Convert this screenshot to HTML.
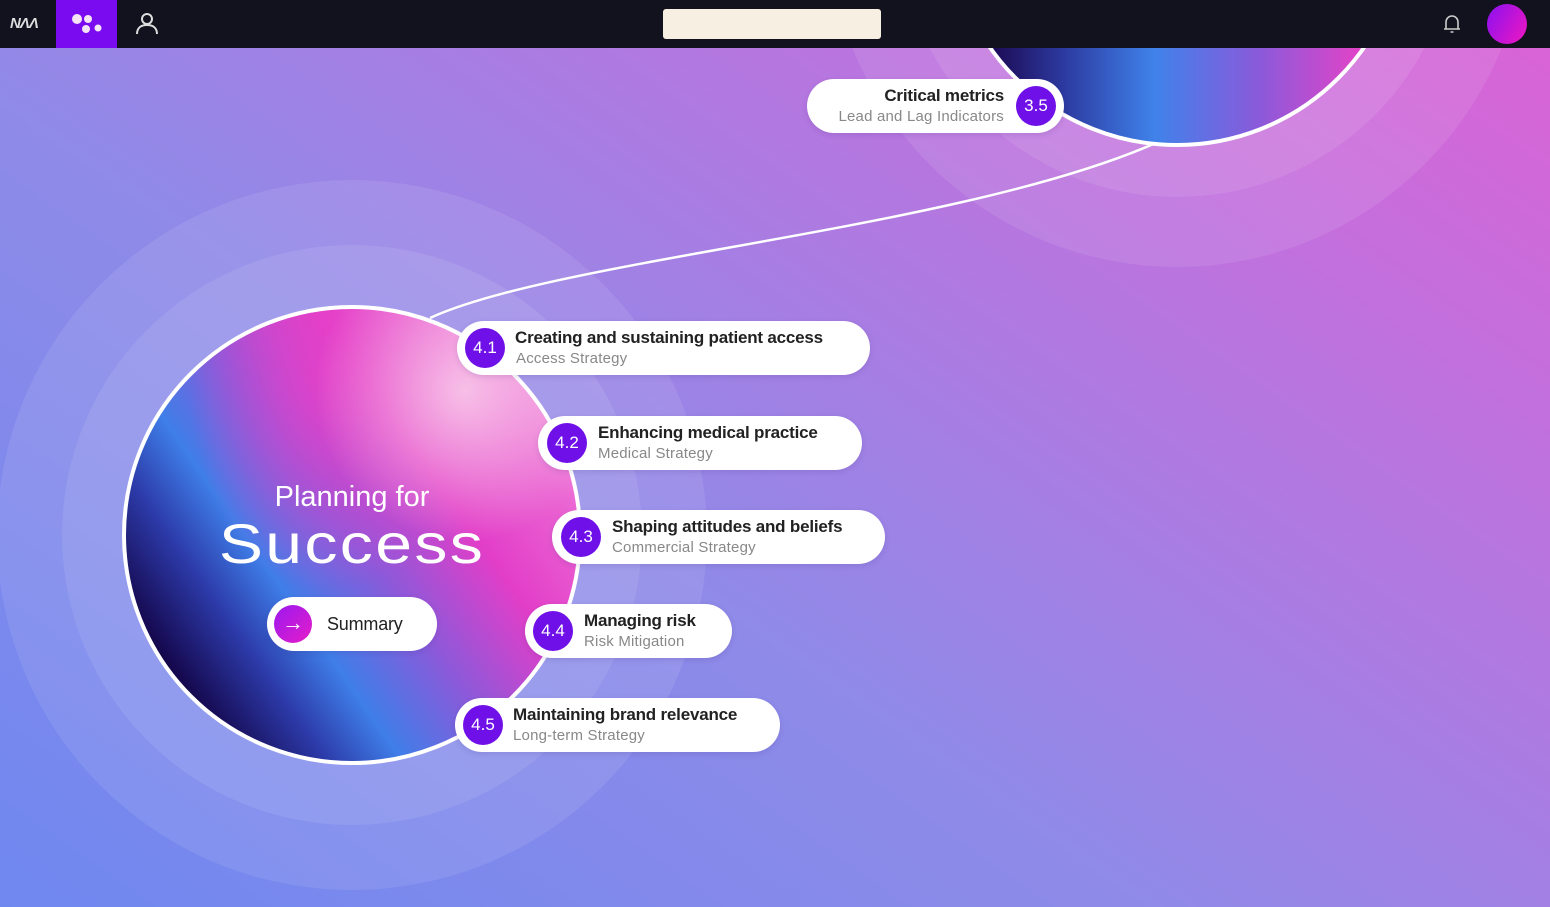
<!DOCTYPE html>
<html><head><meta charset="utf-8"><style>
*{margin:0;padding:0;box-sizing:border-box}
body{width:1550px;height:907px;overflow:hidden;position:relative;font-family:"Liberation Sans",sans-serif;
background:linear-gradient(215deg,#dc62d6 0%,#b676e0 30%,#8f8ae8 60%,#6f88f0 100%);}
.nav{position:absolute;left:0;top:0;width:1550px;height:48px;background:#12121f;}
.halo{position:absolute;border-radius:50%;background:rgba(255,255,255,0.09)}
.circ{position:absolute;border-radius:50%;border:4px solid #fff;overflow:hidden}
.pill{position:absolute;height:54px;background:#fff;border-radius:27px;box-shadow:0 2px 6px rgba(60,40,120,.15)}
.badge{position:absolute;top:7px;width:40px;height:40px;border-radius:50%;background:#7010e8;color:#fff;font-size:17px;line-height:40px;text-align:center}
.t{position:absolute;top:7px;font-size:17px;color:#222;white-space:nowrap;font-weight:bold;letter-spacing:-.2px}
.s{position:absolute;top:29px;font-size:15px;color:#888;white-space:nowrap;letter-spacing:.2px}
</style></head><body>
<div class="halo" style="left:-3px;top:180px;width:710px;height:710px"></div>
<div class="halo" style="left:62px;top:245px;width:580px;height:580px"></div>
<div class="halo" style="left:827px;top:-433px;width:700px;height:700px"></div>
<div class="halo" style="left:897px;top:-363px;width:560px;height:560px"></div>
<svg style="position:absolute;left:0;top:0" width="1550" height="907"><path d="M430 318 C 560 258, 960 230, 1158 142" stroke="#fff" stroke-width="2.5" fill="none"/></svg>
<div class="circ" style="left:947px;top:-313px;width:460px;height:460px;background:linear-gradient(90deg,#1c0850 8%,#2c3aa0 25%,#3f82ea 45%,#8a5ada 68%,#e044c8 90%)"></div>
<div class="circ" style="left:122px;top:305px;width:460px;height:460px;background:
radial-gradient(circle at 75% 18%,rgba(248,196,232,.95),rgba(248,180,230,0) 30%),
radial-gradient(ellipse at 45% 15%,rgba(230,64,200,.85),rgba(230,64,200,0) 40%),
linear-gradient(55deg,#14064a 14%,#2c3aa8 26%,#3f7ee8 36%,#8a5ada 50%,#e23ec8 66%,#ea62d2 80%,#f4b0e2 100%)">
<div style="position:absolute;left:0;width:452px;top:172px;text-align:center;color:#fff;font-size:29px">Planning for</div>
<div style="position:absolute;left:0;width:452px;top:202px;text-align:center;color:#fff;font-size:56px;letter-spacing:2px;transform:scaleX(1.18)">Success</div>
</div>
<div class="pill" style="left:267px;top:597px;width:170px;border-radius:27px">
<div style="position:absolute;left:7px;top:8px;width:38px;height:38px;border-radius:50%;background:linear-gradient(135deg,#9a18f0,#e61ec8);color:#fff;text-align:center;line-height:36px;font-size:22px">→</div>
<div class="t" style="left:60px;top:17px;font-size:18px;font-weight:normal">Summary</div></div>

<div class="pill" style="left:457px;top:321px;width:413px"><div class="badge" style="left:8px">4.1</div><div class="t" style="left:58px">Creating and sustaining patient access</div><div class="s" style="left:59px">Access Strategy</div></div>
<div class="pill" style="left:538px;top:416px;width:324px"><div class="badge" style="left:9px">4.2</div><div class="t" style="left:60px">Enhancing medical practice</div><div class="s" style="left:60px">Medical Strategy</div></div>
<div class="pill" style="left:552px;top:510px;width:333px"><div class="badge" style="left:9px">4.3</div><div class="t" style="left:60px">Shaping attitudes and beliefs</div><div class="s" style="left:60px">Commercial Strategy</div></div>
<div class="pill" style="left:525px;top:604px;width:207px"><div class="badge" style="left:8px">4.4</div><div class="t" style="left:59px">Managing risk</div><div class="s" style="left:59px">Risk Mitigation</div></div>
<div class="pill" style="left:455px;top:698px;width:325px"><div class="badge" style="left:8px">4.5</div><div class="t" style="left:58px">Maintaining brand relevance</div><div class="s" style="left:58px">Long-term Strategy</div></div>
<div class="pill" style="left:807px;top:79px;width:257px"><div class="badge" style="left:209px">3.5</div><div class="t" style="right:60px">Critical metrics</div><div class="s" style="right:60px">Lead and Lag Indicators</div></div>

<div class="nav">
<div style="position:absolute;left:10px;top:15px;color:#ddd;font-size:15px;font-weight:bold;font-style:italic;letter-spacing:-1px">NΛΛ</div>
<div style="position:absolute;left:56px;top:0;width:61px;height:48px;background:#7a0af0"></div>
<svg style="position:absolute;left:56px;top:0" width="61" height="48"><circle cx="21" cy="19" r="5" fill="#f4e4f4"/><circle cx="32" cy="19" r="4" fill="#f4e4f4"/><circle cx="30" cy="29" r="4" fill="#f4e4f4"/><circle cx="42" cy="28" r="3.5" fill="#f4e4f4"/></svg>
<svg style="position:absolute;left:134px;top:12px" width="26" height="24" fill="none" stroke="#ddd" stroke-width="2"><circle cx="13" cy="7" r="5"/><path d="M3 22 C3 15 8 13 13 13 C18 13 23 15 23 22"/></svg>
<div style="position:absolute;left:663px;top:9px;width:218px;height:30px;background:#f7f0e2;border-radius:3px"></div>
<svg style="position:absolute;left:1442px;top:13px" width="20" height="22" fill="none" stroke="#ccc" stroke-width="1.6"><path d="M4 16 V9 a6 6 0 0 1 12 0 V16 Z M2 16 H18 M8.5 19 h3"/></svg>
<div style="position:absolute;left:1487px;top:4px;width:40px;height:40px;border-radius:50%;background:linear-gradient(120deg,#8a10f0,#f018c0)"></div>
</div>
</body></html>
